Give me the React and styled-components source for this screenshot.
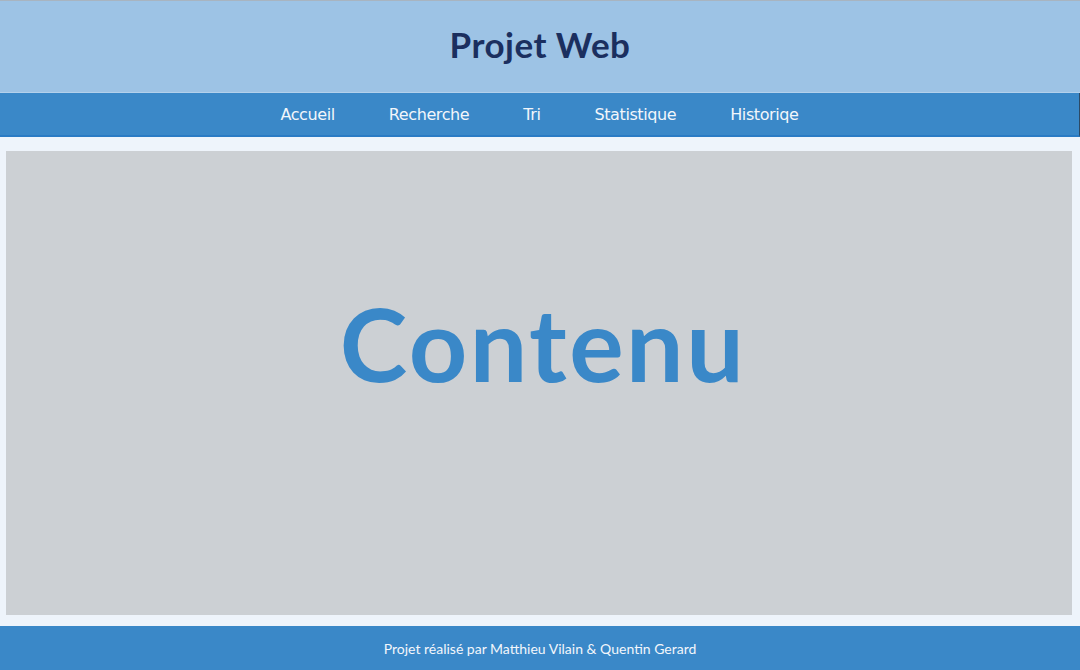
import React from "react";
import styled, { createGlobalStyle } from "styled-components";

const GlobalStyle = createGlobalStyle`
  html, body {
    margin: 0;
    padding: 0;
    background: #eef4fb;
  }
  #root {
    min-height: 100vh;
  }
`;

const links = ["Accueil", "Recherche", "Tri", "Statistique", "Historiqe"];

function App() {
  return (
    <Page>
      <GlobalStyle />
      <Header>
        <Title>Projet Web</Title>
      </Header>
      <Nav>
        {links.map((link, index) => (
          <NavLink key={index} href="#">
            {link}
          </NavLink>
        ))}
      </Nav>
      <Main>
        <ContentBox>
          <BigText>Contenu</BigText>
        </ContentBox>
      </Main>
      <Footer>Projet réalisé par Matthieu Vilain &amp; Quentin Gerard</Footer>
    </Page>
  );
}

export default App;

const Page = styled.div`
  height: 670px;
  display: flex;
  flex-direction: column;
  background: #eef4fb;
`;

const Header = styled.header`
  height: 91px;
  border-top: 1px solid #a8b4c0;
  border-bottom: 1px solid #b4d1ec;
  background: #9dc3e5;
  display: flex;
  align-items: center;
  justify-content: center;
`;

const Title = styled.h1`
  margin: 0 0 5px 0;
  font-family: Lato, "Open Sans", sans-serif;
  font-weight: 700;
  font-size: 35px;
  color: #1b2f5f;
  letter-spacing: 0.5px;
`;

const Nav = styled.nav`
  height: 41px;
  background: #3a88c8;
  border-bottom: 2px solid #2a7bc4;
  border-right: 1px solid #2c4a66;
  display: flex;
  align-items: center;
  justify-content: center;
  padding-top: 1px;
`;

const NavLink = styled.a`
  padding: 0 27px;
  font-family: "DejaVu Sans", sans-serif;
  font-size: 16px;
  color: #f2f6fb;
  text-decoration: none;
  letter-spacing: -0.4px;
`;

const Main = styled.main`
  flex: 1;
  padding: 14px 8px 11px 6px;
  display: flex;
`;

const ContentBox = styled.section`
  flex: 1;
  background: #ccd0d4;
  display: flex;
  align-items: center;
  justify-content: center;
`;

const BigText = styled.div`
  font-family: Lato, "Open Sans", sans-serif;
  font-weight: 700;
  font-size: 102px;
  color: #3a88c8;
  letter-spacing: 2.5px;
  margin-left: 8px;
  margin-bottom: 82px;
`;

const Footer = styled.footer`
  height: 44px;
  background: #3a88c8;
  display: flex;
  align-items: center;
  justify-content: center;
  font-family: Lato, "Open Sans", sans-serif;
  font-size: 14px;
  color: #f2f6fb;
`;
